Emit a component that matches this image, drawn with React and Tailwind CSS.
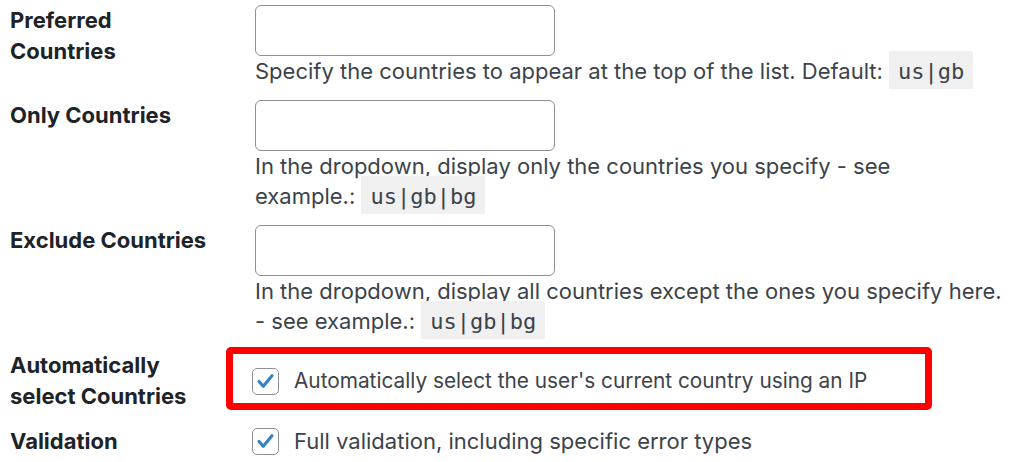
import React from 'react';

const Check = () => (
  <span className="flex h-[27px] w-[27px] shrink-0 items-center justify-center rounded-[5px] border-[1.5px] border-[#8c8f94] bg-white">
    <svg viewBox="0 0 27 27" className="h-[27px] w-[27px]">
      <path d="M6.5 13.5l4.6 5.2L20.5 7.2" fill="none" stroke="#3582c4" strokeWidth="3.4" strokeLinecap="round" strokeLinejoin="round" />
    </svg>
  </span>
);

const Code = ({ children }) => (
  <code className="bg-[#f0f0f1] px-[9px] pt-[8px] pb-[5px] text-[22px] leading-[20px] text-[#3c434a] font-['DejaVu_Sans_Mono',monospace]">
    {children}
  </code>
);

const Field = () => (
  <div className="h-[51px] w-[300px] rounded-[6px] border-[1.5px] border-[#8c8f94] bg-white" />
);

const Row = ({ label, className = '', labelClass = '', children }) => (
  <div className={`flex ${className}`}>
    <div className={`w-[245px] shrink-0 text-[22px] font-bold leading-[31px] text-[#1d2327] ${labelClass}`}>
      {label}
    </div>
    <div className="flex-1">{children}</div>
  </div>
);

export default function App() {
  return (
    <div className="min-h-[462px] w-[1024px] bg-white pl-[10px] pt-[5px] font-['Inter',sans-serif] text-[#3c434a]">
      <Row label={<>Preferred<br />Countries</>}>
        <Field />
        <p className="whitespace-nowrap text-[22px] leading-[30px]">
          Specify the countries to appear at the top of the list. Default: <Code>us|gb</Code>
        </p>
      </Row>

      <Row label="Only Countries" className="mt-[14px]">
        <Field />
        <p className="whitespace-nowrap text-[22px] leading-[30px]">
          In the dropdown, display only the countries you specify - see
          <br />
          example.: <Code>us|gb|bg</Code>
        </p>
      </Row>

      <Row label="Exclude Countries" className="mt-[14px]">
        <Field />
        <p className="whitespace-nowrap text-[22px] leading-[30px]">
          In the dropdown, display all countries except the ones you specify here.
          <br />
          - see example.: <Code>us|gb|bg</Code>
        </p>
      </Row>

      <Row label={<>Automatically<br />select Countries</>} className="mt-[11px]" labelClass="pt-[3px]">
        <div className="-ml-[29px] w-[706px] rounded-[5px] border-[7px] border-[#ff0000] pl-[19px] pt-[12px] pb-[7px]">
          <label className="flex items-center gap-[15px] text-[20.8px] leading-[30px]">
            <Check />
            <span className="whitespace-nowrap">Automatically select the user's current country using an IP</span>
          </label>
        </div>
      </Row>

      <Row label="Validation" className="mt-[14px]">
        <label className="-ml-[3px] flex items-center gap-[15px] text-[22px] leading-[30px]">
          <Check />
          <span className="whitespace-nowrap">Full validation, including specific error types</span>
        </label>
      </Row>
    </div>
  );
}
